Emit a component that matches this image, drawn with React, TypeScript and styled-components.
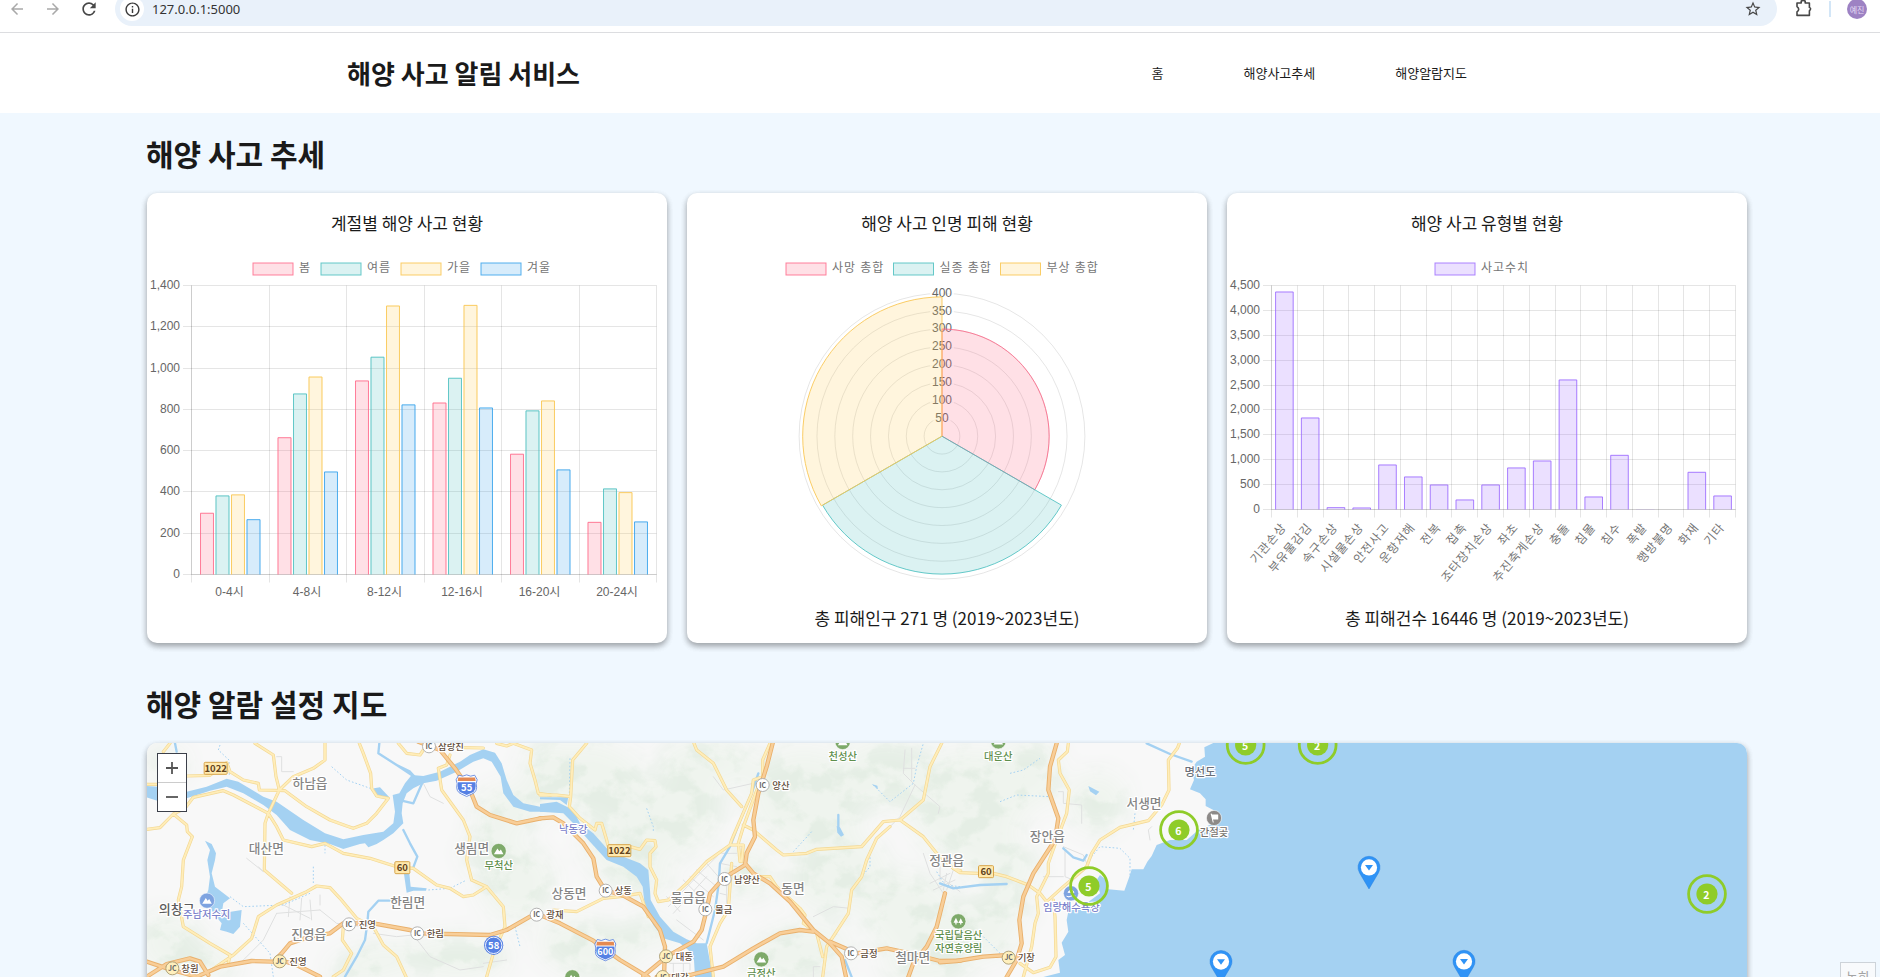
import React from "react";
import styled, { createGlobalStyle } from "styled-components";
import { MdArrowBack, MdArrowForward, MdRefresh, MdInfoOutline, MdStarBorder } from "react-icons/md";

const KR = `"Noto Sans CJK KR", "Noto Sans", sans-serif`;
const CHART_FONT = `"Liberation Sans", "Noto Sans CJK KR", sans-serif`;

const GlobalStyle = createGlobalStyle`
  * { box-sizing: border-box; }
  html, body { margin: 0; height: 977px; overflow: hidden; }
  body { background: #f0f8ff; font-family: ${KR}; color: #1a1a1a; }
  h1, h2, h3, p { margin: 0; }
`;

const Page = styled.div`
  position: relative;
  width: 1880px;
  height: 977px;
  overflow: hidden;
`;

/* ---------- browser bar ---------- */

const BrowserBar = styled.div`
  height: 33px;
  overflow: hidden;
  background: #fff;
  border-bottom: 1px solid #dcdde0;
`;
const BarRow = styled.div`
  display: flex;
  align-items: center;
  height: 34px;
  margin-top: -8px;
  padding: 0 13px 0 8px;
`;
const BarIcon = styled.span<{ $muted?: boolean; $gap: number }>`
  display: flex;
  margin-right: ${(p) => p.$gap}px;
  color: ${(p) => (p.$muted ? "#a9a9a9" : "#474747")};
`;
const Omnibox = styled.div`
  display: flex;
  flex: 1;
  align-items: center;
  height: 34px;
  padding: 0 15px 0 5px;
  border-radius: 17px;
  background: #e9f1fa;
`;
const SiteInfo = styled.span`
  display: flex;
  align-items: center;
  justify-content: center;
  width: 24px;
  height: 24px;
  border-radius: 50%;
  background: #fff;
  color: #3a3a3a;
`;
const Url = styled.span`
  flex: 1;
  margin-left: 8px;
  font: 13px "Noto Sans", sans-serif;
  color: #333;
`;
const BarDivider = styled.span`
  width: 2px;
  height: 16px;
  margin: 0 16px 0 16px;
  background: #d3e6f7;
`;
const Avatar = styled.span`
  display: flex;
  align-items: center;
  justify-content: center;
  width: 20px;
  height: 20px;
  border-radius: 50%;
  background: #9d82c3;
  color: #e6dcf4;
  font-size: 8px;
`;

/* ---------- site header ---------- */

const Header = styled.header`
  display: flex;
  align-items: center;
  justify-content: space-between;
  height: 80px;
  padding: 0 413px 0 347px;
  background: #fff;
`;
const SiteTitle = styled.h1`
  font-size: 26px;
  font-weight: 700;
  line-height: 38px;
`;
const Nav = styled.nav`
  display: flex;
  gap: 80px;
  font-size: 13px;
  line-height: 20px;
`;

/* ---------- content ---------- */

const Main = styled.main`
  width: 1600px;
  margin-left: 147px;
`;
const SectionTitle = styled.h2<{ $top: number }>`
  padding: ${(p) => p.$top}px 0 18px;
  font-size: 30px;
  font-weight: 700;
  line-height: 44px;
  text-indent: -1px;
`;
const Cards = styled.section`
  display: grid;
  grid-template-columns: repeat(3, 520px);
  gap: 20px;
`;
const Card = styled.article`
  display: flex;
  flex-direction: column;
  height: 450px;
  border-radius: 10px;
  background: #fff;
  box-shadow: 0 3px 6px rgba(0, 0, 0, 0.2), 0 3px 6px rgba(0, 0, 0, 0.2);
`;
const CardTitle = styled.h3`
  height: 60px;
  font-size: 17px;
  font-weight: 400;
  line-height: 60px;
  text-align: center;
`;
const CardNote = styled.p`
  margin-top: 1px;
  font-size: 17px;
  line-height: 28px;
  text-align: center;
`;
const ChartSvg = styled.svg`
  display: block;
  width: 520px;
  height: 350px;
  font-family: ${CHART_FONT};
  font-size: 12px;
  fill: #666;
`;

type Tone = { fill: string; line: string };
const RED: Tone = { fill: "rgba(255,99,132,.2)", line: "rgba(255,99,132,.8)" };
const TEAL: Tone = { fill: "rgba(75,192,192,.2)", line: "rgba(75,192,192,.85)" };
const GOLD: Tone = { fill: "rgba(255,205,86,.2)", line: "rgba(250,200,86,.9)" };
const BLUE: Tone = { fill: "rgba(54,162,235,.2)", line: "rgba(54,162,235,.85)" };
const PURPLE: Tone = { fill: "rgba(153,102,255,.2)", line: "rgba(153,102,255,.8)" };

const Legend = ({ items }: { items: { x: number; label: string; tone: Tone }[] }) => (
  <g>
    {items.map((it) => (
      <g key={it.label}>
        <rect x={it.x} y={10} width={40} height={12} fill={it.tone.fill} stroke={it.tone.line} />
        <text x={it.x + 46} y={19.2} letterSpacing={0.96} fill="#757575">{it.label}</text>
      </g>
    ))}
  </g>
);

type BarProps = {
  labels: string[];
  series: { tone: Tone; values: number[] }[];
  max: number;
  step: number;
  bottom: number;
  right: number;
  slanted?: boolean;
};
const LEFT = 44.5;
const TOP = 32.5;

function BarChart({ labels, series, max, step, bottom, right, slanted }: BarProps) {
  const cat = (right - LEFT) / labels.length;
  const slot = (cat * 0.8) / series.length;
  const bar = slot * 0.9;
  const y = (v: number) => bottom - (v / max) * (bottom - TOP);
  const ticks = Array.from({ length: max / step + 1 }, (_, i) => i * step);
  const snap = (n: number) => Math.floor(n) + 0.5;
  return (
    <g>
      {ticks.map((t) => (
        <g key={t}>
          <line x1={36} x2={right} y1={snap(y(t))} y2={snap(y(t))} stroke="rgba(0,0,0,.1)" />
          <text x={33} y={y(t) + 3.5} textAnchor="end">{t.toLocaleString("en-US")}</text>
        </g>
      ))}
      {Array.from({ length: labels.length + 1 }, (_, i) => (
        <line key={i} x1={snap(LEFT + i * cat)} x2={snap(LEFT + i * cat)} y1={TOP} y2={bottom + 8} stroke="rgba(0,0,0,.1)" />
      ))}
      <path d={`M${LEFT},${TOP}V${bottom}H${right}`} fill="none" stroke="rgba(0,0,0,.1)" />
      {labels.map((l, i) =>
        slanted ? (
          <text key={l} transform={`translate(${LEFT + (i + 0.5) * cat - 0.5},272) rotate(-50)`} y={4} textAnchor="end" letterSpacing={0.96} fill="#757575">{l}</text>
        ) : (
          <text key={l} x={LEFT + (i + 0.5) * cat - 0.7} y={343} textAnchor="middle">{l}</text>
        )
      )}
      {series.map((s, si) =>
        s.values.map((v, i) => {
          const x = LEFT + i * cat + cat * 0.1 + si * slot + (slot - bar) / 2;
          const t = y(v);
          return (
            <g key={`${si}-${i}`}>
              <rect x={x} y={t} width={bar} height={bottom - t} fill={s.tone.fill} />
              {bottom - t > 1 && (
                <path d={`M${x + 0.5},${bottom}V${t + 0.5}H${x + bar - 0.5}V${bottom}`} fill="none" stroke={s.tone.line} />
              )}
            </g>
          );
        })
      )}
    </g>
  );
}

function PolarChart() {
  const cx = 255;
  const cy = 183.2;
  const unit = 142.9 / 400;
  const slices = [
    { v: 300, tone: RED },
    { v: 386, tone: TEAL },
    { v: 390, tone: GOLD },
  ];
  const pt = (deg: number, r: number) => {
    const a = ((deg - 90) * Math.PI) / 180;
    return `${cx + r * Math.cos(a)},${cy + r * Math.sin(a)}`;
  };
  const rings = [50, 100, 150, 200, 250, 300, 350, 400];
  return (
    <g>
      {rings.map((r) => (
        <circle key={r} cx={cx} cy={cy} r={r * unit} fill="none" stroke="rgba(0,0,0,.1)" />
      ))}
      {rings.map((r) => (
        <g key={r}>
          <rect x={cx - (r < 100 ? 8.7 : 12)} y={cy - r * unit - 8} width={r < 100 ? 17.4 : 24} height={16} fill="rgba(255,255,255,.75)" />
          <text x={cx} y={cy - r * unit + 3.4} textAnchor="middle">{r}</text>
        </g>
      ))}
      {slices.map((s, i) => (
        <path
          key={i}
          d={`M${cx},${cy}L${pt(i * 120, s.v * unit)}A${s.v * unit},${s.v * unit} 0 0 1 ${pt(i * 120 + 120, s.v * unit)}Z`}
          fill={s.tone.fill}
          stroke={s.tone.line}
        />
      ))}
    </g>
  );
}

/* ---------- map ---------- */

const MapPanel = styled.section`
  position: relative;
  height: 500px;
  border-radius: 10px;
  background: #f7f8f7;
  overflow: hidden;
  box-shadow: 0 3px 6px rgba(0, 0, 0, 0.2), 0 3px 6px rgba(0, 0, 0, 0.2);
`;
const MapSvg = styled.svg`
  display: block;
  font-family: ${KR};
`;
const ZoomControl = styled.div`
  position: absolute;
  top: 10px;
  left: 10px;
  width: 30px;
  border: 1px solid #3b3f49;
  background: #fff;
`;
const ZoomButton = styled.button`
  display: flex;
  align-items: center;
  justify-content: center;
  width: 28px;
  height: 28px;
  padding: 0;
  border: 0;
  background: #fff;
  & + & { border-top: 1px solid #ccc; height: 29px; }
`;

/* The map is charted in three sheets at a scale of 3:1. */
type Sheet = "A" | "B" | "C";
const ORIGIN: Record<Sheet, [number, number]> = { A: [-17, -83], B: [393, -13], C: [793, -13] };
const at = (s: Sheet, x: number, y: number): [number, number] => [x / 3 + ORIGIN[s][0], y / 3 + ORIGIN[s][1]];
const sheetTransform = (s: Sheet) => `translate(${ORIGIN[s][0]},${ORIGIN[s][1]}) scale(.33333)`;

type Lines = Record<Sheet, string>;

const WATER: Lines = {
  A: "M50,378L82,380L170,395L230,380L290,356L325,365L400,410L440,425L520,480L585,520L640,538L700,525L760,515L790,490L795,455L788,405L808,400L825,370L845,345L880,348L930,335L990,305L1020,285L1060,268L1095,278L1115,310L1130,360L1150,405L1180,430L1230,440L1262,430L1262,455L1200,455L1150,440L1120,400L1112,350L1085,305L1060,295L1030,305L980,335L920,362L880,370L850,385L830,400L818,430L815,460L820,490L790,520L760,540L740,552L715,562L705,550L690,552L640,567L600,552L540,540L480,510L440,465L400,435L340,400L290,380L240,392L170,415L82,422L50,412ZM225,542L245,552L258,580L255,600L245,640L255,680L300,715L280,730L275,760L335,750L330,800L310,822L290,815L270,810L275,790L250,760L225,715L235,690L240,650L232,600L240,570ZM732,385L750,382L778,412L735,410ZM822,642L838,640L842,680L890,685L888,692L850,692L830,698Z",
  B: "M0,222L50,215L100,240L120,280L160,310L200,355L250,380L300,400L325,420L330,480L332,510L360,560L400,605L440,628L470,640L500,640L518,741L465,741L462,690L445,660L420,640L370,625L340,585L315,535L308,470L290,440L250,410L200,390L150,335L110,290L70,250L0,245ZM0,202L85,202L80,225L60,210L0,208ZM890,288L900,292L912,315L903,320L892,308ZM995,162L1012,167L1014,178Z",
  C: "M822,38L793,52L795,80L770,95L755,118L762,150L750,178L780,190L797,208L797,228L820,240L830,275L775,300L740,330L690,330L650,345L635,378L622,395L610,418L575,418L568,440L553,482L505,478L500,450L480,435L470,450L480,490L440,520L385,545L380,570L385,605L365,638L375,675L355,690L360,728L310,741L2430,760L2430,30ZM445,168L478,185L468,196L450,184Z",
};
const STREAMS: Lines = {
  A: "M748,250L745,280L800,315L840,335L858,355M748,250L745,280L800,315L845,345L855,360M877,368L850,430L815,422M780,722L745,722L715,755L712,790L705,840L680,890L645,950M820,510L840,550L862,590L850,622M135,250L140,275",
  B: "M655,130L635,190L605,260L570,350L540,400L535,470L525,540L500,640M895,255L895,290M915,690L935,741",
  C: "M620,40L690,72L755,95M370,355L400,382L430,392L440,375M0,460L40,475L120,465L200,462",
};
const DOTS: Lines = {
  A: "M270,255L265,270L297,300L298,350M605,320L650,360L735,390M585,555V580M550,620V670M300,710L340,740L460,735L540,700M340,790L420,880L430,950M895,690L960,685L1010,660M1155,800L1170,860",
  B: "M90,85L88,190M1000,165L1050,215L1120,160L1130,110L1150,40M990,360L990,410L965,440M910,570L885,620M320,235L340,290V305M815,305L760,365M1190,425L1215,465L1260,470",
  C: "M210,130L250,120L300,85M180,215L230,195L330,200L345,220M585,250L580,300M455,380L480,350L540,355L570,385L570,440M130,620L190,680",
};
const STREETS: Lines = {
  A: "M440,290H455V335H490M350,595L400,635L385,620M440,760L570,750M450,730L540,775M480,710L475,770M515,715L510,780M540,720L545,780M570,705V735M570,750L620,790L700,800M730,820L800,830L850,825L900,890L990,930L1060,920M330,910L400,840L440,760M880,370L900,410L940,430M1060,910L1130,900",
  B: "M385,530L470,440L530,380M400,550L500,440M380,500L420,545M430,450L500,520M450,440L520,500M470,420L530,470M500,400L535,440M410,570L490,630M545,370H590M540,400L590,410M540,490L560,495M560,440V520M1095,60L1090,130L1125,165M1090,115H1125M1115,55V150M1125,165L1200,230L1195,250M1125,165L1080,260L1040,300M1150,370L1170,430L1210,490M1170,460L1230,430M1180,480L1245,450M1200,400V450M820,560L880,530L930,535M520,140L550,180L640,160M400,700V730M430,700V730M390,700H450V720M820,741V710H840",
  C: "M355,185H370V220L425,225V280M370,350L430,375L440,400M375,360V440L400,450M310,440H370M635,290L625,300L630,330M0,440L60,485M20,430L10,480M40,420L20,480",
};
const YELLOW: Lines = {
  A: "M50,373H85M170,348L240,346L290,308L300,335L340,360L385,370L388,390L465,392L530,440L600,480L650,498L670,505L710,490L740,460L775,415L740,408L725,385L722,340L700,280L688,250M375,250L430,285L438,350L448,390L490,350L550,325L585,300L585,250M448,390L415,460L405,490L403,630L485,700M50,508L90,503L130,462L165,445L190,412L280,392L310,405L415,460L440,500L460,540L545,560L585,550L640,580L720,595L800,620L850,625L920,675L960,685L1000,710L1030,705L1070,680M130,462L170,495L172,515L187,530L160,600L155,680L145,720L160,800L240,850L300,885L295,910M230,940L310,885L365,835L385,770L440,735L530,695L560,678L600,683L630,715L680,775L730,800L760,855L800,890L828,950M640,800L637,840L665,880L640,930L610,950M960,285L950,315L925,325L935,390L1000,480L1020,530L1010,600L1025,660L1070,680L1120,740L1125,800L1090,880L1070,950M805,250L830,280L870,285L880,270M970,262L1060,264M1100,250L1130,258L1150,250L1205,270L1200,310L1215,360L1225,400L1262,405M120,250L100,275",
  B: "M0,195L50,195L92,200L98,90L140,40M92,200L88,230L120,265L165,300L170,280L185,280L200,330L205,350M270,350L300,358L320,330L345,332L348,350L330,370L330,410L350,450L345,490L355,515L385,510L440,460L500,395L570,345L610,345L605,395M462,40L470,60L520,100L560,180L605,230M690,40L668,90L668,140L640,150L635,190L605,260L575,330L570,345M660,155L610,290L595,340L600,395M610,285L640,300L710,360L730,375L800,370L830,358L965,350L1030,275L1080,270L1150,210L1170,110L1205,40M1080,270L1150,320L1190,370L1240,415L1262,422M1050,290L1010,325L980,390L965,440L935,480L925,550L860,650L848,741M40,540L110,545L190,505L240,500L300,490L325,560M575,400L565,540L540,580L510,650L520,741M650,440L690,440L710,470L780,535L795,555L790,580L830,610L848,680",
  C: "M385,40L382,65L355,90L360,130L388,180L380,250L350,330L325,400L325,430L290,500L295,550L285,580L275,650L250,741M718,40L712,55L685,90L687,180L665,225L625,272L540,292L480,330L455,370L440,410L370,470L320,515L300,490L265,465L200,440L160,430M40,415L60,428L115,430M340,510L345,560L348,680L330,712L280,728L240,700",
};
const ORANGE: Lines = {
  A: "M865,245L930,270L975,325L1020,390L1040,440L1080,465L1160,490L1232,475M50,905L120,928L200,950M50,950L110,912L180,895L210,905L235,945M200,950L270,920L365,903L430,905L455,880L480,850L540,830L600,820L640,790L730,790L840,810L870,820L1080,825L1130,810L1200,770M450,900L500,915L570,950",
  B: "M0,265L40,262L70,280L130,340L160,385L170,440L195,480L250,497L310,530L360,600L375,650L372,741M0,555L60,580L160,632L240,690L325,741M310,738L380,680L460,635L485,600L500,540L510,490L550,445L615,405L620,370L645,320L640,270L655,190L680,110L698,40M615,400L640,430L690,460L750,515L820,600L870,640L905,680L918,741M350,741L450,735L550,710L640,655L720,610L780,600L820,605M870,635L950,670L1040,655L1110,670L1200,693L1262,692M1215,490L1190,590L1160,650L1120,700L1105,741",
  C: "M350,40L330,110L325,180L355,265L345,330L280,430L250,500L238,570L245,640L230,690L200,741M0,697L50,693L130,680L205,675",
};

const SHEETS: Sheet[] = ["A", "B", "C"];
function Layer({ lines, color, width, dash, filled }: { lines: Lines; color: string; width: number; dash?: string; filled?: boolean }) {
  return (
    <g fill={filled ? color : "none"} stroke={filled ? "none" : color} strokeWidth={width} strokeLinejoin="round" strokeLinecap={dash ? "butt" : "round"} strokeDasharray={dash}>
      {SHEETS.map((s) => (
        <path key={s} d={lines[s]} transform={sheetTransform(s)} />
      ))}
    </g>
  );
}

/* cx, cy, rx, ry, rotation of each wooded area */
const HILLS = [
  [450, 40, 55, 40, 20], [520, 75, 60, 40, -20], [560, 20, 50, 25, 0], [480, 120, 50, 25, 30], [660, 55, 60, 50, 10],
  [740, 30, 50, 35, 0], [690, 130, 50, 40, -20], [760, 170, 45, 40, 10], [820, 60, 60, 55, 0], [840, 110, 55, 25, 20],
  [880, 30, 35, 35, 0], [650, 210, 55, 28, -10], [440, 205, 50, 28, 10], [500, 190, 30, 15, 0], [360, 70, 35, 28, -20],
  [370, 140, 38, 38, 10], [340, 110, 25, 20, 0], [400, 30, 25, 35, 0], [20, 20, 20, 15, 0], [20, 190, 30, 18, 0],
  [40, 215, 50, 20, 10], [230, 220, 50, 18, -10], [310, 215, 50, 22, 0], [830, 185, 42, 32, 0], [780, 220, 45, 22, 0],
  [950, 60, 30, 30, 0], [600, 130, 28, 25, 0], [860, 160, 25, 22, 0],
];

type Label = [Sheet, number, number, string];
const TOWNS: Label[] = [
  ["A", 540, 370, "하남읍"], ["A", 409, 566, "대산면"], ["A", 1025, 566, "생림면"], ["A", 833, 728, "한림면"], ["A", 536, 824, "진영읍"],
  ["B", 87, 489, "상동면"], ["B", 445, 503, "물금읍"], ["B", 759, 474, "동면"], ["B", 1220, 391, "정관읍"], ["B", 1118, 681, "철마면"],
  ["C", 322, 320, "장안읍"], ["C", 612, 220, "서생면"],
];
const JUNCTION_NAMES: Label[] = [
  ["A", 963, 259, "삼랑진"], ["A", 712, 794, "진영"], ["A", 916, 820, "한림"], ["A", 504, 905, "진영"], ["A", 180, 926, "창원"],
  ["B", 45, 553, "광재"], ["B", 250, 482, "상동"], ["B", 723, 165, "양산"], ["B", 621, 447, "남양산"], ["B", 551, 538, "물금"],
  ["B", 433, 679, "대동"], ["B", 420, 741, "대감"], ["B", 987, 670, "금정"], ["C", 259, 683, "기장"],
];
const JUNCTIONS: Label[] = [
  ["A", 897, 259, "IC"], ["A", 657, 793, "IC"], ["A", 862, 820, "IC"], ["A", 1220, 764, "IC"], ["A", 449, 904, "JC"], ["A", 127, 925, "JC"],
  ["B", 197, 482, "IC"], ["B", 668, 165, "IC"], ["B", 554, 447, "IC"], ["B", 496, 538, "IC"], ["B", 378, 679, "JC"], ["B", 368, 741, "JC"],
  ["B", 933, 670, "IC"], ["C", 206, 683, "JC"],
];
const GREEN_NAMES: Label[] = [
  ["A", 1106, 615, "무척산"], ["B", 908, 79, "천성산"], ["B", 664, 728, "금정산"], ["C", 175, 78, "대운산"], ["C", 56, 616, "국립달음산"], ["C", 56, 653, "자연휴양림"],
];
const WATER_NAMES: Label[] = [["A", 230, 763, "주남저수지"], ["B", 100, 296, "낙동강"], ["C", 394, 532, "임랑해수욕장"]];
const PLATES: Label[] = [["A", 257, 325, "1022"], ["A", 817, 623, "60"], ["B", 238, 362, "1022"], ["C", 138, 425, "60"]];

function Names({ items, size, color, weight = 500 }: { items: Label[]; size: number; color: string; weight?: number }) {
  return (
    <g fontSize={size} fontWeight={weight} fill={color} textAnchor="middle" stroke="#fff" strokeWidth={2.4} strokeLinejoin="round" paintOrder="stroke">
      {items.map(([s, x, y, t], i) => {
        const [px, py] = at(s, x, y);
        return <text key={i} x={px} y={py + size * 0.38}>{t}</text>;
      })}
    </g>
  );
}

const Junction = ({ item: [s, x, y, t] }: { item: Label }) => {
  const [px, py] = at(s, x, y);
  return (
    <g transform={`translate(${px},${py})`}>
      <circle r={6.5} fill={t === "JC" ? "#fff0bd" : "#fff"} stroke={t === "JC" ? "#a89a70" : "#aaa"} strokeWidth={0.9} />
      <text y={2.6} fontSize={7} fontWeight={700} fill="#666" textAnchor="middle">{t}</text>
    </g>
  );
};

const Plate = ({ item: [s, x, y, t] }: { item: Label }) => {
  const [px, py] = at(s, x, y);
  const w = t.length > 2 ? 23 : 15;
  return (
    <g transform={`translate(${px},${py})`}>
      <rect x={-w / 2} y={-6} width={w} height={12} rx={1} fill="#ffe9ad" stroke="#d7a54c" />
      <text y={3.5} fontSize={9.5} fontWeight={700} fill="#62431d" textAnchor="middle">{t}</text>
    </g>
  );
};

const Shield = ({ pos: [x, y], text }: { pos: [number, number]; text: string }) => (
  <g transform={`translate(${x},${y})`}>
    <path d="M-8,-10.5L-4,-9.5L0,-10.8L4,-9.5L8,-10.5L10.5,-6L9.5,-2Q11.5,6 5,8.5L0,10.8L-5,8.5Q-11.5,6 -9.5,-2L-10.5,-6Z" fill="#fff" stroke="#4f79dc" strokeWidth={0.8} />
    <path d="M-8.6,-3.4Q-10.5,5.5 -4.5,7.4L0,9.4L4.5,7.4Q10.5,5.5 8.6,-3.4Z" fill="#5580e4" />
    <path d="M-8.4,-8.2H8.4L9,-4.6H-9Z" fill="#e58a52" />
    <text y={5} fontSize={text.length > 2 ? 9 : 9.5} fontWeight={700} fill="#fff" textAnchor="middle">{text}</text>
  </g>
);

const Poi = ({ pos: [x, y], color, kind }: { pos: [number, number]; color: string; kind: "peak" | "tree" | "flag" | "wave" }) => (
  <g transform={`translate(${x},${y})`}>
    <circle r={7.6} fill={color} stroke="#fff" strokeWidth={0.8} strokeOpacity={0.7} />
    {kind === "peak" && <path d="M-4.8,3.2L-1.2,-2.6L0.6,0.2L2.2,-1.6L4.8,3.2Z" fill="#fff" />}
    {kind === "tree" && <path d="M-2.4,-3.6L-4.8,1.4H-3V3.2H-1.8V1.4H0ZM2.4,-3L0,1.6H1.8V3.2H3V1.6H4.8Z" fill="#fff" />}
    {kind === "flag" && <path d="M-3.4,-4.2L-2.4,-4.4L-1.8,-3.4H4.2V1.6H-1L-0.2,4.4H-1.2Z" fill="#fff" />}
    {kind === "wave" && <path d="M-4.5,2.8Q-2.2,4.4 0,2.8T4.5,2.8M-3,-1L0,-4L3,-1Z" fill="#fff" stroke="#fff" strokeWidth={1} />}
  </g>
);

const Cluster = ({ pos: [x, y], count }: { pos: [number, number]; count: number }) => (
  <g transform={`translate(${x},${y})`}>
    <circle r={18.4} fill="none" stroke="#8fcc29" strokeWidth={2.8} />
    <circle r={10.6} fill="#8fcc29" />
    <text y={4.8} x={-0.6} fontSize={10.5} fontWeight={700} fill="#fff" textAnchor="middle">{count}</text>
  </g>
);

const Pin = ({ x, y }: { x: number; y: number }) => (
  <g transform={`translate(${x},${y})`}>
    <path d="M0,21.5L-9.4,5.6A11,11 0 1 1 9.4,5.6Z" fill="#2f93f6" stroke="#2a82de" strokeWidth={0.5} />
    <circle r={8.1} fill="#fff" />
    <path d="M-4,-2.4H4L0,3.2Z" fill="#2f93f6" />
  </g>
);

function SeaMap() {
  return (
    <MapSvg width={1600} height={234} viewBox="0 0 1600 234">
      <defs>
        <filter id="soft" x="-20%" y="-20%" width="140%" height="140%">
          <feGaussianBlur stdDeviation="11" />
        </filter>
        <filter id="relief" x="0" y="0" width="100%" height="100%">
          <feTurbulence type="fractalNoise" baseFrequency="0.034 0.04" numOctaves="4" seed="11" />
          <feColorMatrix values="0 0 0 0 0.77  0 0 0 0 0.85  0 0 0 0 0.77  6 0 0 0 -2.7" />
        </filter>
        <mask id="hills">
          <g filter="url(#soft)" fill="#fff">
            {HILLS.map(([cx, cy, rx, ry, r], i) => (
              <ellipse key={i} cx={cx} cy={cy} rx={rx} ry={ry} transform={`rotate(${r} ${cx} ${cy})`} />
            ))}
          </g>
        </mask>
      </defs>
      <rect width={1600} height={234} fill="#f8f8f8" />
      <g mask="url(#hills)">
        <rect width={1000} height={234} fill="#eff4ee" />
        <rect width={1000} height={234} filter="url(#relief)" opacity={0.8} />
      </g>
      <Layer lines={STREETS} color="#dfe0e0" width={3} />
      <Layer lines={WATER} color="#a4d1f2" width={0} filled />
      <Layer lines={STREAMS} color="#a4d1f2" width={7} />
      <Layer lines={DOTS} color="#a4d1f2" width={3} dash="5 6" />
      <Layer lines={YELLOW} color="#f3d894" width={9.6} />
      <Layer lines={YELLOW} color="#ffedb9" width={5.6} />
      <Layer lines={ORANGE} color="#e9b06c" width={13} />
      <Layer lines={ORANGE} color="#f8ce98" width={7.6} />

      {PLATES.map((p, i) => <Plate key={i} item={p} />)}
      <Shield pos={at("A", 1010, 377)} text="55" />
      <Shield pos={at("B", 196, 660)} text="600" />
      <g transform={`translate(${at("A", 1091, 856).join(",")})`}>
        <circle r={9.6} fill="#5580e4" />
        <circle r={8.2} fill="none" stroke="#fff" strokeWidth={0.9} />
        <text y={3.5} fontSize={9.5} fontWeight={700} fill="#fff" textAnchor="middle">58</text>
      </g>

      <Names items={TOWNS} size={12.7} color="#858585" />
      <Names items={[["A", 140, 747, "의창구"]]} size={13} color="#5c5c5c" />
      <Names items={JUNCTION_NAMES} size={9.4} color="#5f4c3a" />
      <Names items={WATER_NAMES} size={10.3} color="#7b82cb" />
      <Names items={GREEN_NAMES} size={10.3} color="#5f8f4d" />
      <Names items={[["C", 780, 125, "명선도"]]} size={11.3} color="#6b6f78" />
      <Names items={[["C", 822, 305, "간절곶"]]} size={10.4} color="#77736f" />
      {JUNCTIONS.map((j, i) => <Junction key={i} item={j} />)}

      <Poi pos={at("A", 1106, 573)} color="#7eaa6a" kind="peak" />
      <Poi pos={at("B", 908, 36)} color="#7eaa6a" kind="peak" />
      <Poi pos={at("B", 664, 688)} color="#7eaa6a" kind="peak" />
      <Poi pos={at("B", 97, 742)} color="#7eaa6a" kind="peak" />
      <Poi pos={at("C", 175, 34)} color="#7eaa6a" kind="peak" />
      <Poi pos={at("C", 55, 574)} color="#7eaa6a" kind="tree" />
      <Poi pos={at("A", 231, 722)} color="#7ea3e0" kind="peak" />
      <Poi pos={at("C", 393, 490)} color="#7ea3e0" kind="wave" />
      <Poi pos={at("C", 822, 264)} color="#8d8a88" kind="flag" />

      <Cluster pos={at("C", 917, 45)} count={5} />
      <Cluster pos={at("C", 1133, 45)} count={2} />
      <Cluster pos={at("C", 717, 300)} count={6} />
      <Cluster pos={at("C", 447, 468)} count={5} />
      <Cluster pos={[1560, 151]} count={2} />
      <Pin x={1222} y={124.4} />
      <Pin x={1317} y={218.4} />
      <Pin x={1074} y={218.6} />
    </MapSvg>
  );
}

const RecordHint = styled.div`
  position: absolute;
  top: 962px;
  left: 1840px;
  width: 36px;
  height: 30px;
  padding-top: 4px;
  border: 1px solid #cdd3d9;
  background: #f8fafc;
  color: #a3a3a3;
  font-size: 13px;
  line-height: 20px;
  text-align: center;
`;

export default function App() {
  return (
    <Page>
      <GlobalStyle />
      <BrowserBar>
        <BarRow>
          <BarIcon $muted $gap={18}><MdArrowBack size={18} /></BarIcon>
          <BarIcon $muted $gap={17}><MdArrowForward size={18} /></BarIcon>
          <BarIcon $gap={16}><MdRefresh size={20} /></BarIcon>
          <Omnibox>
            <SiteInfo><MdInfoOutline size={17} /></SiteInfo>
            <Url>127.0.0.1:5000</Url>
            <BarIcon $gap={0}><MdStarBorder size={18} /></BarIcon>
          </Omnibox>
          <BarIcon $gap={0}>
            <svg width={36} height={20} viewBox="0 0 36 20" fill="none" stroke="#474747" strokeWidth={1.6} strokeLinejoin="round">
              <path d="M20,4H24.2V2.2Q26.2,0.4 28.2,2.2V4H32.4V8.4Q34.8,9.6 32.4,11.8V16.4H20V12.8Q23.4,10.2 20,7.6Z" />
            </svg>
          </BarIcon>
          <BarDivider />
          <Avatar>예진</Avatar>
        </BarRow>
      </BrowserBar>

      <Header>
        <SiteTitle>해양 사고 알림 서비스</SiteTitle>
        <Nav>
          <span>홈</span>
          <span>해양사고추세</span>
          <span>해양알람지도</span>
        </Nav>
      </Header>

      <Main>
        <SectionTitle $top={18}>해양 사고 추세</SectionTitle>
        <Cards>
          <Card>
            <CardTitle>계절별 해양 사고 현황</CardTitle>
            <ChartSvg>
              <Legend
                items={[
                  { x: 106, label: "봄", tone: RED },
                  { x: 174, label: "여름", tone: TEAL },
                  { x: 254, label: "가을", tone: GOLD },
                  { x: 334, label: "겨울", tone: BLUE },
                ]}
              />
              <BarChart
                labels={["0-4시", "4-8시", "8-12시", "12-16시", "16-20시", "20-24시"]}
                max={1400}
                step={200}
                bottom={321.5}
                right={509.5}
                series={[
                  { tone: RED, values: [299, 665, 940, 833, 585, 255] },
                  { tone: TEAL, values: [383, 877, 1055, 953, 795, 417] },
                  { tone: GOLD, values: [388, 959, 1303, 1306, 843, 399] },
                  { tone: BLUE, values: [268, 499, 824, 809, 509, 257] },
                ]}
              />
            </ChartSvg>
          </Card>
          <Card>
            <CardTitle>해양 사고 인명 피해 현황</CardTitle>
            <ChartSvg>
              <Legend
                items={[
                  { x: 99, label: "사망 총합", tone: RED },
                  { x: 206.5, label: "실종 총합", tone: TEAL },
                  { x: 313.5, label: "부상 총합", tone: GOLD },
                ]}
              />
              <PolarChart />
            </ChartSvg>
            <CardNote>총 피해인구 271 명 (2019~2023년도)</CardNote>
          </Card>
          <Card>
            <CardTitle>해양 사고 유형별 현황</CardTitle>
            <ChartSvg>
              <Legend items={[{ x: 208, label: "사고수치", tone: PURPLE }]} />
              <BarChart
                slanted
                labels={["기관손상", "부유물감김", "속구손상", "시설물손상", "안전사고", "운항저해", "전복", "접촉", "조타장치손상", "좌초", "추진축계손상", "충돌", "침몰", "침수", "폭발", "행방불명", "화재", "기타"]}
                max={4500}
                step={500}
                bottom={256.5}
                right={508.5}
                series={[{ tone: PURPLE, values: [4379, 1848, 47, 40, 904, 663, 502, 201, 502, 844, 984, 2612, 261, 1098, 10, 0, 757, 281] }]}
              />
            </ChartSvg>
            <CardNote>총 피해건수 16446 명 (2019~2023년도)</CardNote>
          </Card>
        </Cards>

        <SectionTitle $top={38}>해양 알람 설정 지도</SectionTitle>
        <MapPanel>
          <SeaMap />
          <ZoomControl>
            <ZoomButton aria-label="확대">
              <svg width={12} height={12} stroke="#555" strokeWidth={1.8}><path d="M6,0V12M0,6H12" /></svg>
            </ZoomButton>
            <ZoomButton aria-label="축소">
              <svg width={12} height={12} stroke="#555" strokeWidth={1.8}><path d="M0,6H12" /></svg>
            </ZoomButton>
          </ZoomControl>
        </MapPanel>
      </Main>
      <RecordHint>녹화</RecordHint>
    </Page>
  );
}
